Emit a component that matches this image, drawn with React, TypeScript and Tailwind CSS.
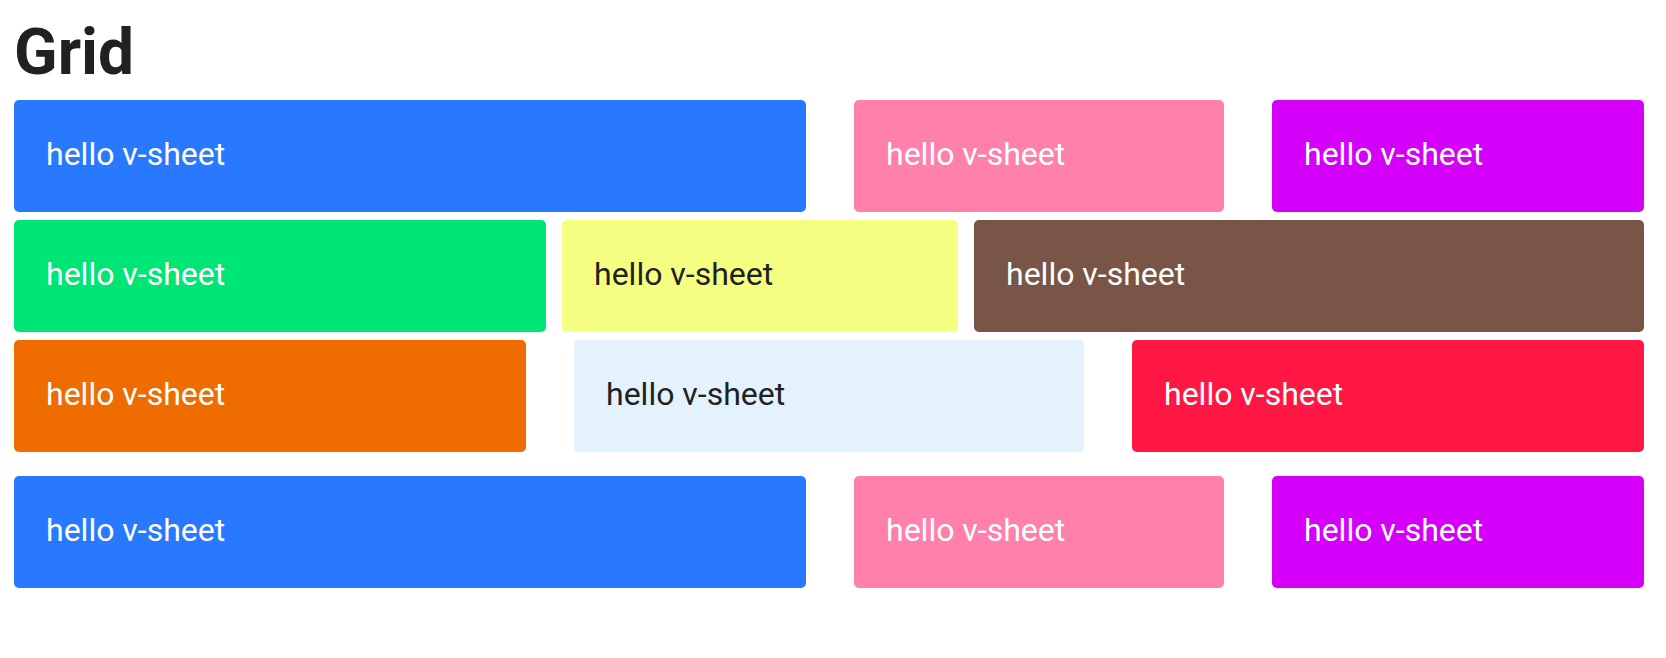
import React from 'react';

type Sheet = { bg: string; width: string; dark?: boolean };

const rows: { gap: string; extra?: string; sheets: Sheet[] }[] = [
  {
    gap: 'gap-12',
    sheets: [
      { bg: 'bg-[#2979ff]', width: 'w-[792px]' },
      { bg: 'bg-[#ff80ab]', width: 'w-[370px]' },
      { bg: 'bg-[#d500f9]', width: 'w-[372px]' },
    ],
  },
  {
    gap: 'gap-4',
    sheets: [
      { bg: 'bg-[#00e676]', width: 'w-[532px]' },
      { bg: 'bg-[#f4ff81]', width: 'w-[396px]', dark: true },
      { bg: 'bg-[#795548]', width: 'w-[670px]' },
    ],
  },
  {
    gap: 'gap-12',
    sheets: [
      { bg: 'bg-[#ef6c00]', width: 'w-[512px]' },
      { bg: 'bg-[#e3f2fd]', width: 'w-[510px]', dark: true },
      { bg: 'bg-[#ff1744]', width: 'w-[512px]' },
    ],
  },
  {
    gap: 'gap-12',
    extra: 'mt-4',
    sheets: [
      { bg: 'bg-[#2979ff]', width: 'w-[792px]' },
      { bg: 'bg-[#ff80ab]', width: 'w-[370px]' },
      { bg: 'bg-[#d500f9]', width: 'w-[372px]' },
    ],
  },
];

const HelloSheet: React.FC<{ sheet: Sheet }> = ({ sheet }) => (
  <div
    className={`${sheet.width} ${sheet.bg} ${sheet.dark ? 'text-[#212121]' : 'text-white'} h-[112px] shrink-0 rounded-[5px] flex items-center px-8 pb-1`}
  >
    <span className="text-[32px] leading-[40px]">hello v-sheet</span>
  </div>
);

const App: React.FC = () => {
  return (
    <div className="min-h-screen bg-white pl-[14px] pr-[22px] pt-[21px] font-['Roboto',_'Liberation_Sans',_sans-serif]">
      <h1 className="h-[64px] text-[64px] leading-[64px] font-bold text-[#212121]">Grid</h1>

      <div className="mt-[15px] flex flex-col gap-2">
        {rows.map((row, i) => (
          <div key={i} className={`flex ${row.gap} ${row.extra ?? ''}`}>
            {row.sheets.map((sheet, j) => (
              <HelloSheet key={j} sheet={sheet} />
            ))}
          </div>
        ))}
      </div>
    </div>
  );
};

export default App;
